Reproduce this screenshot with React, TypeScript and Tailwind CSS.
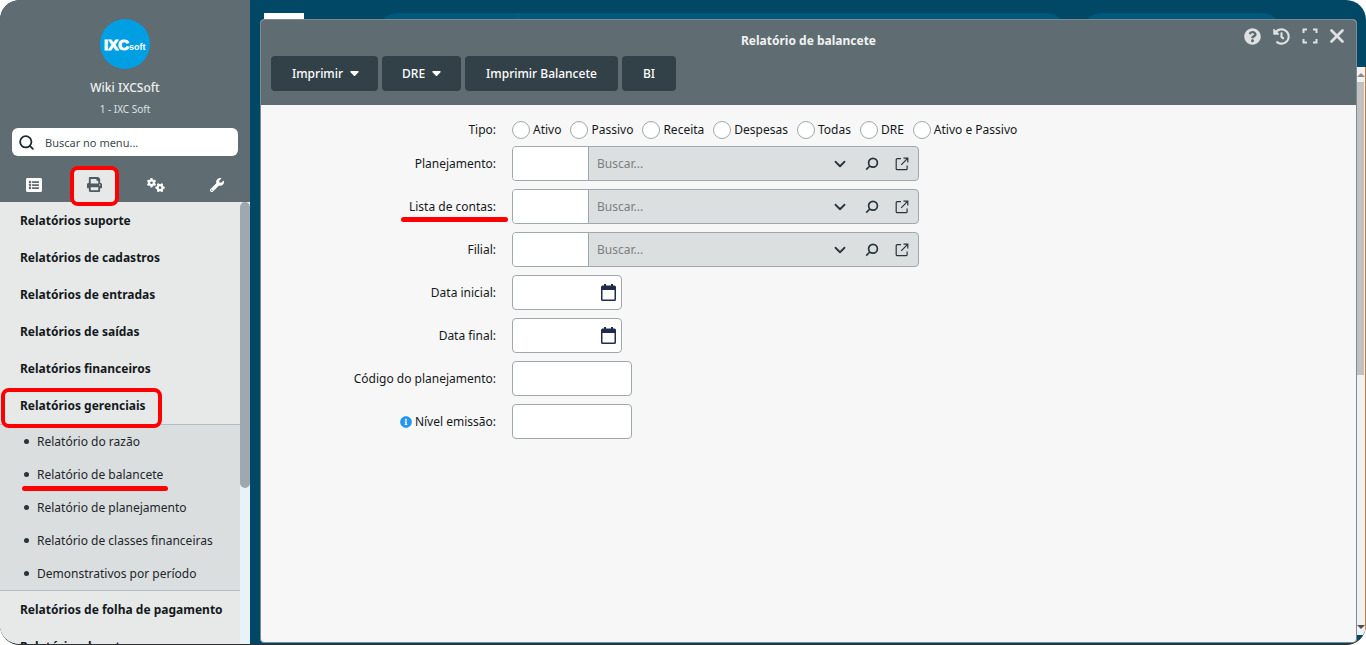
import { useState } from 'react';
import { FaHistory, FaInfoCircle, FaListAlt, FaPrint, FaQuestionCircle, FaWrench } from 'react-icons/fa';
import { FaGears } from 'react-icons/fa6';
import { ChevronDown, Search, X } from 'lucide-react';

const tabs = [
  { id: 'cadastros', label: 'Cadastros', icon: <FaListAlt size={16} /> },
  { id: 'relatorios', label: 'Relatórios', icon: <FaPrint size={15} /> },
  { id: 'configuracoes', label: 'Configurações', icon: <FaGears size={18} /> },
  { id: 'ferramentas', label: 'Ferramentas', icon: <FaWrench size={14} /> },
];

const menuBefore = [
  'Relatórios suporte',
  'Relatórios de cadastros',
  'Relatórios de entradas',
  'Relatórios de saídas',
  'Relatórios financeiros',
];

const submenu = [
  'Relatório do razão',
  'Relatório de balancete',
  'Relatório de planejamento',
  'Relatório de classes financeiras',
  'Demonstrativos por período',
];

const menuAfter = ['Relatórios de folha de pagamento', 'Relatórios de estoque'];

const tipos = ['Ativo', 'Passivo', 'Receita', 'Despesas', 'Todas', 'DRE', 'Ativo e Passivo'];

const fieldBox = 'h-[35px] rounded border border-[#9fa8ad] bg-white outline-none';

function CaretIcon() {
  return (
    <svg width="9" height="5" viewBox="0 0 9 5" fill="currentColor">
      <path d="M1 0h7a.7.7 0 0 1 .5 1.200L5.100 4.700a.8.8 0 0 1-1.200 0L.5 1.200A.7.7 0 0 1 1 0z" />
    </svg>
  );
}

function OpenIcon() {
  return (
    <svg width="14" height="14" viewBox="0 0 14 14" fill="none" stroke="currentColor" strokeWidth="1.2">
      <path d="M6 1.700H2.200a1 1 0 0 0-1 1v9a1 1 0 0 0 1 1h8.900a1 1 0 0 0 1-1V8.400" />
      <path d="M8.500 1.200h4.300v4.300M12.600 1.400 6.200 7.800" />
    </svg>
  );
}

function SearchIcon() {
  return (
    <svg width="14" height="14" viewBox="0 0 14 14" fill="none" stroke="currentColor" strokeWidth="1.7">
      <circle cx="8" cy="5.800" r="4.400" />
      <path d="M4.800 9 1.200 12.600" />
    </svg>
  );
}

function CalendarIcon() {
  return (
    <svg width="15" height="17" viewBox="0 0 15 17" fill="#1f2d4d">
      <path d="M3 0h2v3H3zM10 0h2v3h-2z" />
      <path
        fillRule="evenodd"
        d="M1.500 1.500h12A1.500 1.500 0 0 1 15 3v12.500a1.500 1.500 0 0 1-1.500 1.500h-12A1.500 1.500 0 0 1 0 15.500V3A1.500 1.500 0 0 1 1.500 1.500zM1.500 6v9.500h12V6z"
      />
    </svg>
  );
}

function ExpandIcon() {
  return (
    <svg width="16" height="16" viewBox="0 0 16 16" fill="none" stroke="currentColor" strokeWidth="2">
      <path d="M1.500 5V1.500H5M11 1.500h3.500V5M14.500 11v3.500H11M5 14.500H1.500V11" />
    </svg>
  );
}

function MenuItem({ children }: { children: string }) {
  return (
    <a href="#" className="flex h-[37px] items-center pl-5 text-xs font-bold text-[#14191c]">
      {children}
    </a>
  );
}

function Row({ label, id, info, marked, children }: { label: string; id: string; info?: boolean; marked?: boolean; children: React.ReactNode }) {
  return (
    <div className="flex items-center gap-4">
      <label htmlFor={id} className="relative flex w-[235px] items-center justify-end gap-[3px]">
        {info && <FaInfoCircle size={12} className="text-[#2196f3]" />}
        {label}
        {marked && <span className="absolute -right-3 top-[18px] h-[5px] w-[107px] rounded-full bg-[#ff0000]" />}
      </label>
      {children}
    </div>
  );
}

function LookupField({ id }: { id: string }) {
  return (
    <div className="flex h-[35px] w-[407px] overflow-hidden rounded border border-[#9fa8ad] bg-[#dbdfe0] text-[#27353b]">
      <input id={id} className="w-[76px] border-r border-[#9fa8ad] bg-white px-2 outline-none" />
      <input
        aria-label="Buscar"
        placeholder="Buscar..."
        className="min-w-0 flex-1 bg-transparent pl-2 outline-none placeholder:text-[#7b7f81]"
      />
      <div className="flex items-center gap-4 pr-[9px]">
        <button type="button" aria-label="Abrir lista"><ChevronDown size={18} strokeWidth={2.4} /></button>
        <button type="button" aria-label="Pesquisar"><SearchIcon /></button>
        <button type="button" aria-label="Abrir cadastro"><OpenIcon /></button>
      </div>
    </div>
  );
}

function DateField({ id }: { id: string }) {
  return (
    <div className={`${fieldBox} flex w-[110px] items-center pr-[5px]`}>
      <input id={id} className="min-w-0 flex-1 bg-transparent pl-2 outline-none" />
      <button type="button" aria-label="Abrir calendário"><CalendarIcon /></button>
    </div>
  );
}

function Sidebar() {
  const [activeTab, setActiveTab] = useState('relatorios');

  return (
    <aside className="flex w-[250px] shrink-0 flex-col bg-[#5f6c72] text-white">
      <div className="flex flex-col items-center pt-[19px]">
        <svg width="50" height="50" viewBox="0 0 50 50" role="img" aria-label="IXCsoft">
          <circle cx="25" cy="25" r="25" fill="#009ee3" />
          <text x="4" y="31" fill="#fff" stroke="#fff" strokeWidth="1" fontSize="15" fontWeight="700" fontFamily="Liberation Sans, sans-serif">IXC</text>
          <text x="29" y="31" fill="#fff" fontSize="9" fontWeight="700" fontFamily="Liberation Sans, sans-serif">soft</text>
        </svg>
        <p className="mt-[11px] text-xs font-medium leading-4 text-[#eef0f0]">Wiki IXCSoft</p>
        <p className="mt-[5px] text-[10px] leading-4 text-[#dfe3e4]">1 - IXC Soft</p>
      </div>

      <label className="mx-3 mt-[11px] flex h-7 items-center gap-[10px] rounded-md bg-white pl-[6px] text-[#1d2a30]">
        <Search size={17} strokeWidth={2.5} />
        <input
          aria-label="Buscar no menu"
          placeholder="Buscar no menu..."
          className="min-w-0 flex-1 pt-[2px] text-[11px] outline-none placeholder:text-[#3c4a50]"
        />
      </label>

      <nav className="mt-[11px] flex h-[35px] justify-around px-[3px]">
        {tabs.map((tab) => (
          <button
            key={tab.id}
            aria-label={tab.label}
            onClick={() => setActiveTab(tab.id)}
            className={`relative flex w-[47px] items-center justify-center rounded-t-lg
              ${activeTab === tab.id ? 'bg-[#e7e9e9] text-[#4e5c62]' : 'text-white'}`}
          >
            {tab.icon}
            {tab.id === 'relatorios' && (
              <span className="absolute -inset-x-px -bottom-1 -top-px z-10 rounded-lg border-4 border-[#ff0000]" />
            )}
          </button>
        ))}
      </nav>

      <div className="flex min-h-0 flex-1 bg-[#e9f2f6]">
        <div className="min-w-0 flex-1 overflow-hidden bg-[#e7e9e9]">
          {menuBefore.map((item) => <MenuItem key={item}>{item}</MenuItem>)}
          <div className="relative">
            <MenuItem>Relatórios gerenciais</MenuItem>
            <span className="absolute -bottom-1 left-px top-px w-[161px] rounded-lg border-4 border-[#ff0000]" />
          </div>
          <ul className="border-y border-[#b3bfc5] bg-[#dadedf]">
            {submenu.map((item) => (
              <li key={item}>
                <a href="#" className="relative flex h-[33px] items-center gap-2 pl-6 text-xs text-[#1d262a]">
                  <span className="size-[5px] rounded-full bg-[#27353b]" />
                  {item}
                  {item === 'Relatório de balancete' && (
                    <span className="absolute bottom-0 left-[22px] h-[5px] w-[146px] rounded-full bg-[#ff0000]" />
                  )}
                </a>
              </li>
            ))}
          </ul>
          {menuAfter.map((item) => <MenuItem key={item}>{item}</MenuItem>)}
        </div>
        <div className="w-[10px]">
          <div className="h-[286px] rounded-full bg-[#9fa8af]" />
        </div>
      </div>
    </aside>
  );
}

function ReportWindow() {
  return (
    <section className="absolute bottom-px left-[10px] right-[9px] top-[19px] flex flex-col overflow-hidden rounded border border-[#7c8b92] bg-[#f7f7f7] text-xs text-[#14191c]">
      <header className="relative bg-[#5f6c72] px-[10px] pb-[14px] text-white">
        <h1 className="flex h-9 items-center justify-center pt-[6px] font-bold text-[#f0f2f2]">Relatório de balancete</h1>
        <div className="absolute right-3 top-1 flex h-6 items-center gap-3 text-[#dde1e2]">
          <button aria-label="Ajuda"><FaQuestionCircle size={17} /></button>
          <button aria-label="Histórico"><FaHistory size={17} /></button>
          <button aria-label="Maximizar"><ExpandIcon /></button>
          <button aria-label="Fechar" className="-mx-1"><X size={22} strokeWidth={3} /></button>
        </div>
        <div className="flex gap-1 font-medium">
          <button className="flex h-[35px] items-center gap-[7px] rounded bg-[#324148] pl-[21px] pr-[19px]">
            Imprimir <CaretIcon />
          </button>
          <button className="flex h-[35px] items-center gap-[7px] rounded bg-[#324148] px-5">
            DRE <CaretIcon />
          </button>
          <button className="h-[35px] rounded bg-[#324148] px-[21px]">Imprimir Balancete</button>
          <button className="h-[35px] rounded bg-[#324148] px-[21px]">BI</button>
        </div>
      </header>

      <form className="flex flex-col gap-2 pt-4">
        <fieldset className="-mb-[3px] flex h-5 items-center gap-4">
          <span className="w-[235px] text-right">Tipo:</span>
          <div className="flex gap-[9px]">
            {tipos.map((tipo) => (
              <label key={tipo} className="flex items-center gap-[3px]">
                <input
                  type="radio"
                  name="tipo"
                  className="size-[18px] appearance-none rounded-full border border-[#9fa8ad] bg-white checked:border-[5px] checked:border-[#324148]"
                />
                {tipo}
              </label>
            ))}
          </div>
        </fieldset>
        <Row label="Planejamento:" id="planejamento"><LookupField id="planejamento" /></Row>
        <Row label="Lista de contas:" id="lista" marked><LookupField id="lista" /></Row>
        <Row label="Filial:" id="filial"><LookupField id="filial" /></Row>
        <Row label="Data inicial:" id="data-inicial"><DateField id="data-inicial" /></Row>
        <Row label="Data final:" id="data-final"><DateField id="data-final" /></Row>
        <Row label="Código do planejamento:" id="codigo">
          <input id="codigo" className={`${fieldBox} w-[120px] px-2`} />
        </Row>
        <Row label="Nível emissão:" id="nivel" info>
          <input id="nivel" className={`${fieldBox} w-[120px] px-2`} />
        </Row>
      </form>
    </section>
  );
}

export default function App() {
  return (
    <div className="h-screen bg-white font-['Noto_Sans',sans-serif]">
      <div className="flex h-full overflow-hidden rounded-[20px] border-b border-[#2b2f33] bg-[#004866]">
        <Sidebar />
        <main className="relative flex min-w-0 flex-1 flex-col">
          {/* top bar of the system, mostly behind the window */}
          <div className="flex h-[67px] shrink-0 items-start pl-[14px] pt-[13px]">
            <div className="h-8 w-10 bg-white" />
            <div className="ml-[74px] flex h-10 w-[688px] rounded-full bg-[#00587c]">
              <div className="ml-[140px] border-l border-[#0a6488]" />
            </div>
            <div className="ml-4 h-10 w-[200px] rounded-full bg-[#00587c]" />
          </div>
          <div className="flex min-h-0 flex-1 justify-end pb-[9px]">
            <div className="flex w-[9px] flex-col items-start justify-between overflow-hidden border-r border-[#c9793f] bg-[#f1f1f1]">
              <span className="mt-[6px] border-x-4 border-b-4 border-x-transparent border-b-[#8b8b8b]" />
              <span className="mb-auto mt-[5px] h-[293px] w-[7px] bg-[#c1c1c1]" />
              <span className="mb-[6px] border-x-4 border-t-4 border-x-transparent border-t-[#505050]" />
            </div>
          </div>
          <ReportWindow />
        </main>
      </div>
    </div>
  );
}
